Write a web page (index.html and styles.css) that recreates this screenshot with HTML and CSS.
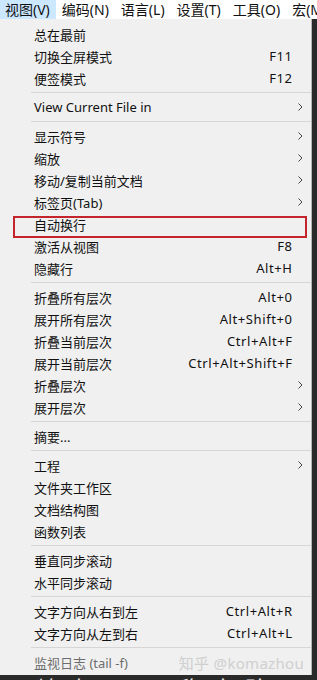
FILE: index.html
```html
<!DOCTYPE html>
<html lang="zh-CN">
<head>
    <meta charset="UTF-8">
    <meta name="viewport" content="width=device-width, initial-scale=1.0">
    <title>视图菜单</title>
    <link rel="stylesheet" href="styles.css">
</head>
<body>
    <div class="menubar">
        <span class="active">视图(V)</span>
        <span>编码(N)</span>
        <span>语言(L)</span>
        <span>设置(T)</span>
        <span>工具(O)</span>
        <span>宏(M)</span>
    </div>

    <div class="dropdown">
        <div class="item"><span>总在最前</span></div>
        <div class="item"><span>切换全屏模式</span><span class="key">F11</span></div>
        <div class="item"><span>便签模式</span><span class="key">F12</span></div>
        <div class="sep"></div>
        <div class="item sub"><span>View Current File in</span></div>
        <div class="sep"></div>
        <div class="item sub"><span>显示符号</span></div>
        <div class="item sub"><span>缩放</span></div>
        <div class="item sub"><span>移动/复制当前文档</span></div>
        <div class="item sub"><span>标签页(Tab)</span></div>
        <div class="item marked"><span>自动换行</span></div>
        <div class="item"><span>激活从视图</span><span class="key">F8</span></div>
        <div class="item"><span>隐藏行</span><span class="key">Alt+H</span></div>
        <div class="sep"></div>
        <div class="item"><span>折叠所有层次</span><span class="key">Alt+0</span></div>
        <div class="item"><span>展开所有层次</span><span class="key">Alt+Shift+0</span></div>
        <div class="item"><span>折叠当前层次</span><span class="key">Ctrl+Alt+F</span></div>
        <div class="item"><span>展开当前层次</span><span class="key">Ctrl+Alt+Shift+F</span></div>
        <div class="item sub"><span>折叠层次</span></div>
        <div class="item sub"><span>展开层次</span></div>
        <div class="sep"></div>
        <div class="item"><span>摘要...</span></div>
        <div class="sep"></div>
        <div class="item sub"><span>工程</span></div>
        <div class="item"><span>文件夹工作区</span></div>
        <div class="item"><span>文档结构图</span></div>
        <div class="item"><span>函数列表</span></div>
        <div class="sep"></div>
        <div class="item"><span>垂直同步滚动</span></div>
        <div class="item"><span>水平同步滚动</span></div>
        <div class="sep"></div>
        <div class="item"><span>文字方向从右到左</span><span class="key">Ctrl+Alt+R</span></div>
        <div class="item"><span>文字方向从左到右</span><span class="key">Ctrl+Alt+L</span></div>
        <div class="sep"></div>
        <div class="item disabled"><span>监视日志 (tail -f)</span><span class="watermark">知乎 @komazhou</span></div>
    </div>

    <div class="behind">▪ 繁 丸 &nbsp; &nbsp; ▪ 稳 审 贻 ソ 分 层 “月 ”分</div>

    <script>
        // submenu chevrons
        document.querySelectorAll('.item.sub').forEach(item => {
            const arrow = document.createElement('span');
            arrow.className = 'arrow';
            arrow.innerHTML = '<svg width="5" height="8" viewBox="0 0 5 8"><polyline points="0.5,0.5 4,4 0.5,7.5" fill="none" stroke="#444" stroke-width="1"/></svg>';
            item.appendChild(arrow);
        });
    </script>
</body>
</html>
```

FILE: styles.css
```css
body {
    margin: 0;
    width: 317px;
    height: 680px;
    overflow: hidden;
    background: #2a2a2a;
    font-family: 'Noto Sans', 'Noto Sans CJK SC', sans-serif;
    color: #111;
}

.menubar {
    height: 19px;
    background: white;
    display: flex;
    font-size: 14px;
    line-height: 19px;
    white-space: nowrap;
    overflow: hidden;
}

.menubar span {
    padding: 0 6px;
}

.menubar span:first-child {
    padding-left: 5px;
}

.menubar .active {
    background: #cce8ff;
}

.dropdown {
    width: 311px;
    background: #f0f0f0;
    border-right: 1px solid #b5b5b5;
    padding: 4px 0 2px;
    font-size: 13px;
}

.item {
    position: relative;
    height: 22px;
    display: flex;
    align-items: center;
    padding: 0 19px 0 34px;
    white-space: nowrap;
}

.item .key {
    margin-left: auto;
    letter-spacing: 0.6px;
    margin-right: -0.6px;
}

.item .arrow {
    position: absolute;
    right: 8px;
    top: 7px;
    height: 8px;
    display: flex;
}

.item.marked::after {
    content: '';
    position: absolute;
    left: 13px;
    right: 4px;
    top: 3px;
    bottom: -3px;
    border: 2px solid #c4252c;
}

.item.disabled {
    color: #6d6d6d;
}

.watermark {
    position: absolute;
    right: 7px;
    top: 1px;
    font-size: 15px;
    color: #cfcfcf;
    letter-spacing: 0.3px;
}

.sep {
    height: 1px;
    margin: 3px 0 3px 31px;
    background: #d6d6d6;
}

.behind {
    height: 6px;
    overflow: hidden;
    color: #e8e8e8;
    font-family: 'Noto Sans CJK SC', sans-serif;
    font-size: 22px;
    line-height: 24px;
    padding-left: 4px;
    word-spacing: 6px;
    white-space: nowrap;
}
```
